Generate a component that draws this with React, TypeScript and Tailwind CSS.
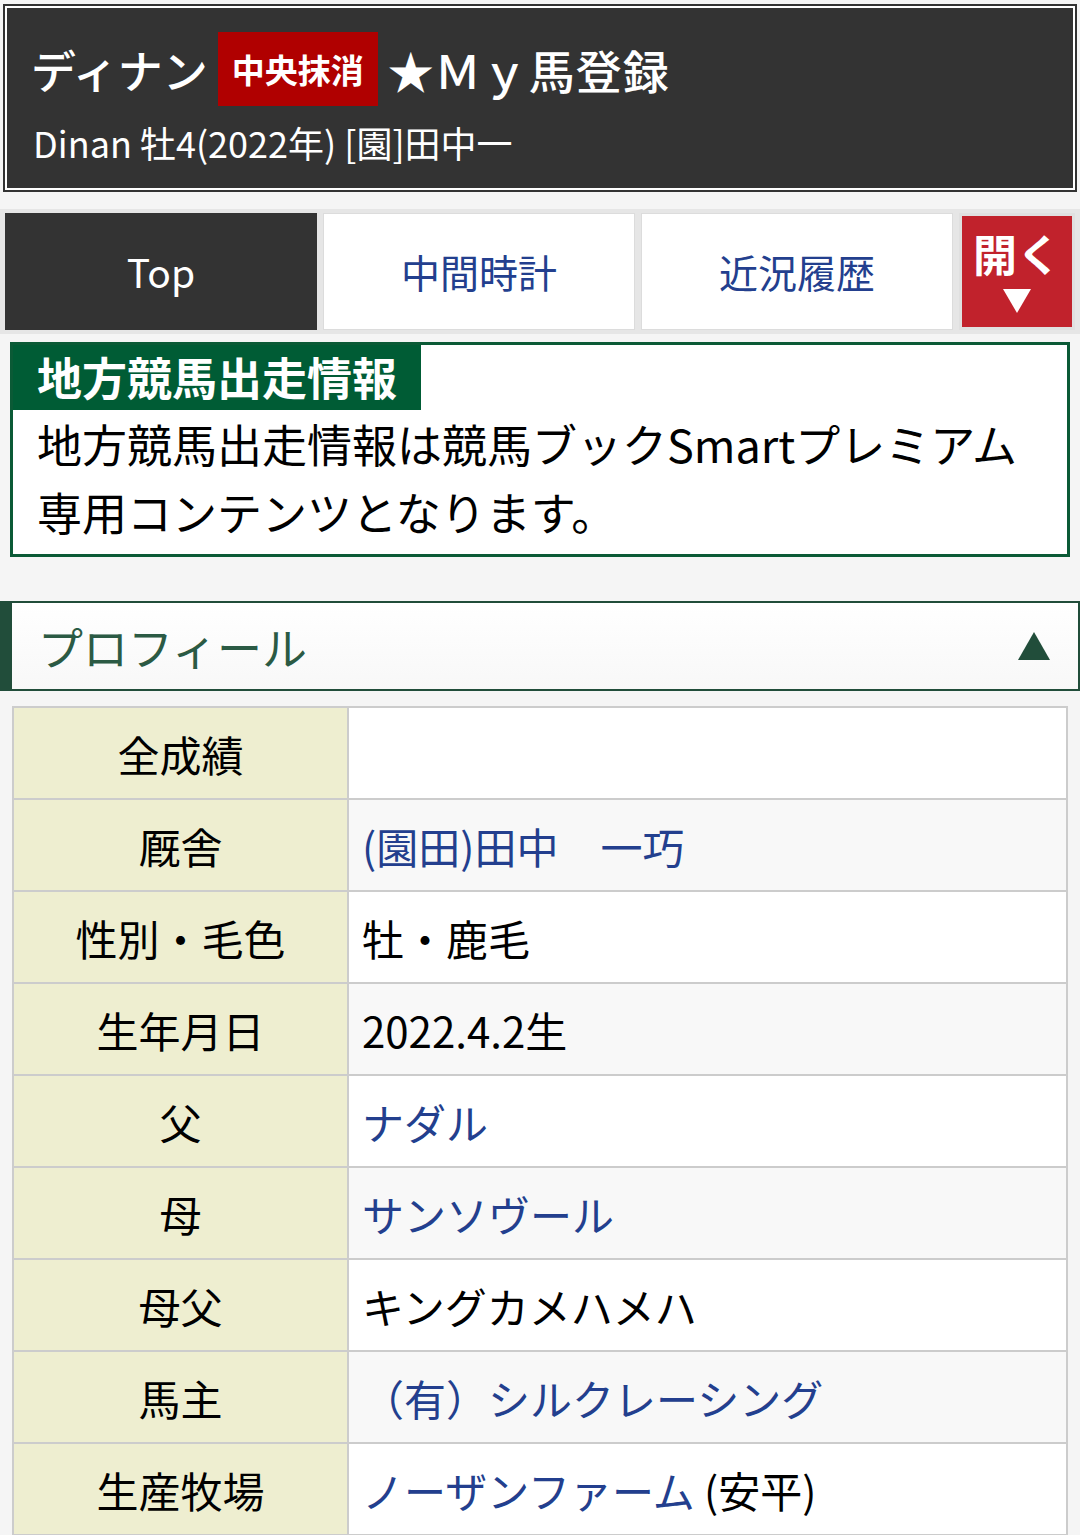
import React from "react";

type Row = {
  label: string;
  value: React.ReactNode;
};

const link = "text-[#233f8e]";

const rows: Row[] = [
  { label: "全成績", value: "" },
  { label: "厩舎", value: <span className={link}>(園田)田中　一巧</span> },
  { label: "性別・毛色", value: "牡・鹿毛" },
  { label: "生年月日", value: "2022.4.2生" },
  { label: "父", value: <span className={link}>ナダル</span> },
  { label: "母", value: <span className={link}>サンソヴール</span> },
  { label: "母父", value: "キングカメハメハ" },
  { label: "馬主", value: <span className={link}>（有）シルクレーシング</span> },
  {
    label: "生産牧場",
    value: (
      <>
        <span className={link}>ノーザンファーム</span> (安平)
      </>
    ),
  },
];

function Header() {
  return (
    <div className="mx-[3px] border-2 border-[#333] bg-white p-[2px]">
      <div className="bg-[#333] px-[24px] pt-[24px] pb-[24px] text-white">
        <div className="flex items-center gap-[10px]">
          <span className="text-[45px] leading-none font-medium">ディナン</span>
          <span className="flex h-[74px] items-center bg-[#b00000] px-[14px] text-[33px] font-bold leading-none">
            中央抹消
          </span>
          <span className="text-[46px] leading-none font-medium tracking-[1px]">★Ｍｙ馬登録</span>
        </div>
        <div className="mt-[14px] pl-[2px] text-[36px] leading-[44px]">Dinan 牡4(2022年) [園]田中一</div>
      </div>
    </div>
  );
}

function Tabs() {
  return (
    <div className="mt-[17px] grid grid-cols-[1fr_1fr_1fr_116px] gap-[6px] bg-[#e6e6e6] px-[5px] py-[4px]">
      <div className="flex h-[117px] items-center justify-center bg-[#333] text-[39px] text-white">Top</div>
      <div className="flex h-[117px] items-center justify-center border border-[#dcdcdc] bg-white text-[39px] text-[#233f8e]">
        中間時計
      </div>
      <div className="flex h-[117px] items-center justify-center border border-[#dcdcdc] bg-white text-[39px] text-[#233f8e]">
        近況履歴
      </div>
      <div className="flex h-[117px] flex-col items-center justify-center border-[3px] border-[#e0e0e0] bg-[#c1222c] text-white">
        <span className="text-[44px] font-bold leading-none">開く</span>
        <svg className="mt-[14px]" width="28" height="24" viewBox="0 0 28 24" aria-hidden>
          <polygon points="0,0 28,0 14,24" fill="#ffffff" />
        </svg>
      </div>
    </div>
  );
}

function Notice() {
  return (
    <div className="mx-[10px] mt-[8px] border-[3px] border-[#0b5a36] bg-white">
      <div className="inline-block bg-[#005c35] px-[24px] pt-[3px] pb-[4px] text-[45px] font-bold leading-[58px] text-white">
        地方競馬出走情報
      </div>
      <p className="px-[24px] pb-[8px] text-[45px] leading-[68px] text-black">
        地方競馬出走情報は競馬ブックSmartプレミアム
        <br />
        専用コンテンツとなります。
      </p>
    </div>
  );
}

function ProfileHeader() {
  return (
    <div className="mt-[44px] flex h-[90px] items-center justify-between border-y-2 border-r-2 border-l-[12px] border-[#214d3a] bg-gradient-to-b from-white to-[#f8f8f8] pr-[28px] pl-[26px]">
      <span className="text-[45px] leading-none text-[#2b5a44]">プロフィール</span>
      <svg width="32" height="28" viewBox="0 0 32 28" aria-hidden>
        <polygon points="16,0 32,28 0,28" fill="#214d3a" />
      </svg>
    </div>
  );
}

function ProfileTable() {
  return (
    <table className="mx-[12px] mt-[15px] w-[1056px] border-collapse text-[42px] text-black">
      <tbody>
        {rows.map((r, i) => (
          <tr key={r.label} className="h-[92px]">
            <td className="w-[335px] border-2 border-[#cccccc] bg-[#eeeed0] text-center">{r.label}</td>
            <td
              className={
                "border-2 border-[#cccccc] pl-[13px] " + (i % 2 === 1 ? "bg-[#f8f8f8]" : "bg-white")
              }
            >
              {r.value}
            </td>
          </tr>
        ))}
      </tbody>
    </table>
  );
}

export default function App() {
  return (
    <div
      className="min-h-[1535px] w-[1080px] overflow-hidden bg-[#f5f5f5] pt-[4px]"
      style={{ fontFamily: '"Noto Sans CJK JP", "Noto Sans", sans-serif' }}
    >
      <Header />
      <Tabs />
      <Notice />
      <ProfileHeader />
      <ProfileTable />
    </div>
  );
}
